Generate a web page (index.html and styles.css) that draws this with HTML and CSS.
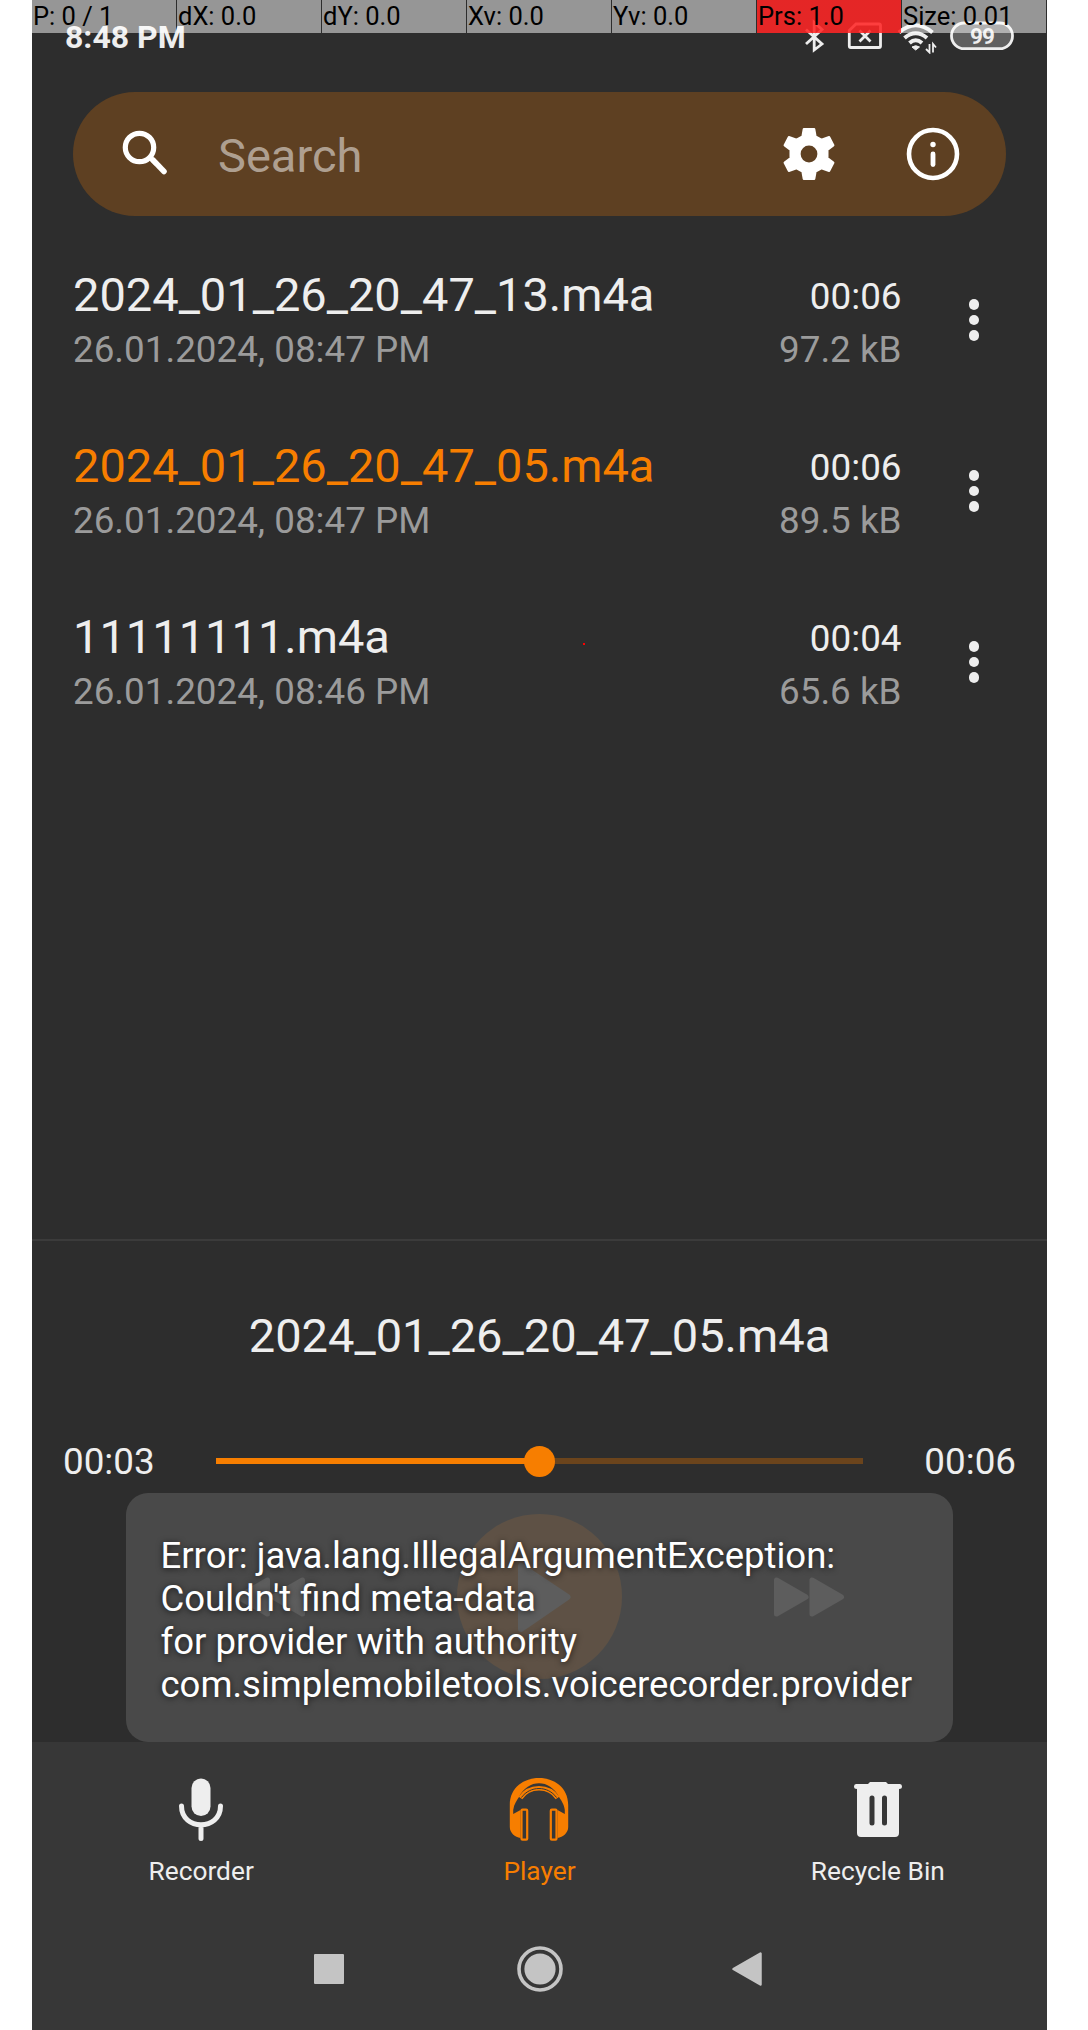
FILE: index.html
```html
<!DOCTYPE html>
<html lang="en">
<head>
<meta charset="utf-8">
<title>Voice Recorder</title>
<link rel="stylesheet" href="styles.css">
</head>
<body>
<main class="phone">
  <header class="status">
    <span class="clock">8:48 PM</span>
    <svg class="status-icons" width="214" height="36" viewBox="0 0 214 36" fill="none" stroke="#eee" stroke-width="2.8">
      <path d="M6 11.500L22 26L14.200 32V4.500L22 11.500L6 26"/>
      <path d="M49.300 12.500L56 6H79Q80.500 6 80.500 7.500V28Q80.500 29.500 79 29.500H50.800Q49.300 29.500 49.300 28Z"/>
      <path d="M59.500 12.500L70.500 23.500M70.500 12.500L59.500 23.500"/>
      <path d="M99 14.500Q115.700 0 132.500 14.500M104.500 20Q115.700 10.500 127 20M109.500 25Q115.700 19.500 122 25" stroke-width="4"/>
      <path d="M112 29Q115.700 26.500 119.500 29L115.700 32Z" fill="#eee" stroke-width="1"/>
      <path d="M129.500 26V34.500L126 31M133 34.500V26L136 29.500" stroke-width="1.800"/>
      <rect x="151.500" y="5" width="61" height="25.700" rx="12.800" fill="#606060"/>
      <text class="battery" x="182" y="26" text-anchor="middle">99</text>
    </svg>
  </header>
  <div class="pointer">
    <span>P: 0 / 1</span><span>dX: 0.0</span><span>dY: 0.0</span><span>Xv: 0.0</span><span>Yv: 0.0</span><span class="pressure">Prs: 1.0</span><span>Size: 0.01</span>
  </div>
  <i class="touch"></i>

  <div class="search">
    <svg class="find" width="62" height="62" viewBox="0 0 62 62" fill="none" stroke="#fff"><circle cx="25.500" cy="24.500" r="14.200" stroke-width="5.200"/><path d="M39 37L50 48.500" stroke-width="5.500" stroke-linecap="round"/><path d="M35 34L42 41" stroke-width="4"/></svg>
    <span class="hint">Search</span>
    <svg width="62" height="62" viewBox="-12 -12 24 24"><path d="M-2-9.600H2L2.500-6.750L4.800-5.500L7.800-6.500L9.400-3.400L7.100-1.600V1.600L9.400 3.400L7.800 6.500L4.800 5.500L2.500 6.750L2 9.600H-2L-2.500 6.750L-4.800 5.500L-7.800 6.500L-9.400 3.400L-7.100 1.600V-1.600L-9.400-3.400L-7.800-6.500L-4.800-5.500L-2.500-6.750Z" fill="#fff" stroke="#fff" stroke-width=".9" stroke-linejoin="round"/><circle r="3.250" fill="#5e4022"/></svg>
    <svg class="info" width="62" height="62" viewBox="0 0 62 62"><circle cx="31" cy="31" r="24" fill="none" stroke="#fff" stroke-width="4.600"/><circle cx="31" cy="21.500" r="2.700" fill="#fff"/><path d="M31 31V41.500" stroke="#fff" stroke-width="4.800" stroke-linecap="round"/></svg>
  </div>

  <section class="list">
    <article class="row"><div class="name"><h2>2024_01_26_20_47_13.m4a</h2><p>26.01.2024, 08:47 PM</p></div><div class="meta"><b>00:06</b><p>97.2 kB</p></div><div class="more"><i></i><i></i><i></i></div></article>
    <article class="row current"><div class="name"><h2>2024_01_26_20_47_05.m4a</h2><p>26.01.2024, 08:47 PM</p></div><div class="meta"><b>00:06</b><p>89.5 kB</p></div><div class="more"><i></i><i></i><i></i></div></article>
    <article class="row"><div class="name"><h2>11111111.m4a</h2><p>26.01.2024, 08:46 PM</p></div><div class="meta"><b>00:04</b><p>65.6 kB</p></div><div class="more"><i></i><i></i><i></i></div></article>
  </section>

  <section class="player">
    <h2>2024_01_26_20_47_05.m4a</h2>
    <div class="progress"><span>00:03</span><div class="track"><i class="played"></i><i class="thumb"></i></div><span>00:06</span></div>
    <div class="controls">
      <svg width="72" height="42" viewBox="0 0 72 42" fill="#eee" stroke="#eee" stroke-width="5" stroke-linejoin="round"><path d="M33.500 4V38L4 21ZM68.500 4V38L39 21Z"/></svg>
      <svg class="play" width="165" height="165" viewBox="0 0 165 165"><circle cx="82.500" cy="82.500" r="82.500" fill="#f77e00"/><path d="M64 52V115L110.500 83Z" fill="#eee" stroke="#eee" stroke-width="6" stroke-linejoin="round"/></svg>
      <svg width="72" height="42" viewBox="0 0 72 42" fill="#eee" stroke="#eee" stroke-width="5" stroke-linejoin="round"><path d="M3.500 4V38L33 21ZM39 4V38L68.500 21Z"/></svg>
    </div>
    <div class="toast">Error: java.lang.IllegalArgumentException:<br>Couldn't find meta-data<br>for provider with authority<br>com.simplemobiletools.voicerecorder.provider</div>
  </section>

  <footer>
    <nav class="tabs">
      <div class="tab"><svg width="66" height="66" viewBox="0 0 66 66"><rect x="23.500" y="1.500" width="19" height="37.500" rx="9.500" fill="#eee"/><path d="M13.500 29C13.500 54 52.500 54 52.500 29M33 49V61.500" fill="none" stroke="#eee" stroke-width="5" stroke-linecap="round"/></svg><span>Recorder</span></div>
      <div class="tab active"><svg width="66" height="66" viewBox="-1 0 66 66"><path d="M2.800 50V28C2.800-8 61.200-8 61.200 28V50C61.200 56 56 60 50.500 61V33L57.800 37V33C57 27 54 23 52 20C43 1.500 21 1.500 12 20C10 23 7 27 6.200 33V37L13.500 33V61C8 60 2.800 56 2.800 50Z" fill="#f77e00"/><g fill="none" stroke="#f77e00"><path d="M13.500 21C22 8 42 8 50.500 21" stroke-width="4.400"/><path d="M14.500 20.500C23 8.500 41 8.500 49.500 20.500" stroke="#373737" stroke-width="1"/><rect x="14.500" y="32.700" width="5.700" height="30" rx="1" fill="#373737" stroke-width="2.200"/><rect x="43.800" y="32.700" width="5.700" height="30" rx="1" fill="#373737" stroke-width="2.200"/></g></svg><span>Player</span></div>
      <div class="tab"><svg width="66" height="66" viewBox="0 0 66 66"><path d="M11 7H23L25 5H41L43 7H55Q57 7 57 9.500Q57 12 54 12V56Q54 60 50 60H16Q12 60 12 56V12Q9 12 9 9.500Q9 7 11 7Z" fill="#eee"/><path d="M27 21V46M39.500 21V46" stroke="#373737" stroke-width="5" stroke-linecap="round"/></svg><span>Recycle Bin</span></div>
    </nav>
    <svg class="keys" width="448" height="48" viewBox="0 0 448 48" fill="#c4c4c4"><rect y="9" width="30" height="30" rx="1"/><circle cx="226" cy="24" r="21" fill="none" stroke="#c4c4c4" stroke-width="3.600"/><circle cx="226" cy="24" r="15.600"/><path d="M419.500 24L446.500 8.500V39.500Z" stroke="#c4c4c4" stroke-width="2.500" stroke-linejoin="round"/></svg>
  </footer>
</main>
</body>
</html>
```

FILE: styles.css
```css
* { box-sizing: border-box; }
body { margin: 0; background: #fff; font-family: Roboto, "Liberation Sans", sans-serif; }
h2, p { margin: 0; font-weight: 400; }
svg { display: block; flex: none; }
.phone { position: relative; display: flex; flex-direction: column; width: 1015px; height: 2030px; margin-left: 32px; overflow: hidden; background: #2d2d2d; color: #eee; }
.status { display: flex; justify-content: space-between; height: 92px; padding: 18px 33px 0 33px; }
.clock { font-size: 32px; line-height: 39px; font-weight: 700; }
.battery { fill: #eee; stroke: none; font-size: 22.500px; font-weight: 700; letter-spacing: -1px; }
.pointer { position: absolute; top: 0; left: 0; display: grid; grid-template-columns: repeat(7, 1fr); width: 100%; height: 33px; }
.pointer span { height: 33px; padding-left: 1px; margin-right: 1px; background: rgba(255, 255, 255, .5); color: #000; font-size: 25.500px; line-height: 33px; white-space: nowrap; }
.pointer .pressure { background: linear-gradient(rgba(255, 0, 0, .75), rgba(255, 0, 0, .75)), rgba(255, 255, 255, .5); }
.touch { position: absolute; left: 551px; top: 643px; width: 2px; height: 2px; background: #f00; }
.search { display: flex; align-items: center; flex: none; height: 124px; margin: 0 41px; padding: 0 42px 0 41px; border-radius: 62px; background: #5e4022; }
.hint { flex: 1; padding: 2px 0 0 42px; color: #ae9f90; font-size: 47px; }
.info { margin-left: 62px; }
.list { flex: 1; padding-top: 36px; }
.row { display: flex; height: 171px; padding: 12px 0 0 41px; }
.name { flex: 1; padding-top: 1px; }
.name h2 { font-size: 47px; line-height: 60px; }
.name p, .meta p { color: #9b9b9b; font-size: 36.800px; line-height: 44px; }
.name p { margin-top: 3px; }
.current h2 { color: #f77e00; }
.meta { width: 150px; padding-top: 11px; text-align: right; }
.meta b { display: block; font-weight: 400; font-size: 36.800px; line-height: 44px; }
.meta p { margin-top: 9px; }
.more { display: flex; flex-direction: column; gap: 5px; width: 145.500px; padding: 35px 0 0 67px; }
.more i { width: 10.500px; height: 10.500px; border-radius: 50%; background: #eee; }
.player { position: relative; flex: none; height: 503px; border-top: 2px solid #3b3b3b; }
.player h2 { padding-top: 65px; text-align: center; font-size: 47px; line-height: 60px; }
.progress { display: flex; align-items: center; justify-content: space-between; height: 44px; margin: 74px 31px 0; font-size: 36.800px; line-height: 44px; }
.track { position: relative; width: 647px; height: 6px; margin-top: -2px; background: #6b441c; }
.played { display: block; width: 50%; height: 100%; background: #f77e00; }
.thumb { position: absolute; left: calc(50% - 15.500px); top: -12.500px; width: 31px; height: 31px; border-radius: 50%; background: #f77e00; }
.controls { display: flex; align-items: center; justify-content: space-between; height: 165px; margin: 30px 202px 0; }
.toast { position: absolute; left: 94px; right: 94px; bottom: 0; height: 249px; padding: 41px 34.500px; border-radius: 22px; background: rgba(77, 77, 77, .9); color: #fff; font-size: 36.500px; line-height: 43px; white-space: nowrap; text-shadow: 0 1px 6px rgba(0, 0, 0, .7); }
footer { flex: none; height: 288px; background: #373737; }
.tabs { display: grid; grid-template-columns: repeat(3, 1fr); height: 203px; }
.tab { display: flex; flex-direction: column; align-items: center; padding-top: 35px; font-size: 26.300px; line-height: 32px; }
.tab span { margin-top: 12px; }
.active { color: #f77e00; }
.keys { margin-left: 282px; }
```
